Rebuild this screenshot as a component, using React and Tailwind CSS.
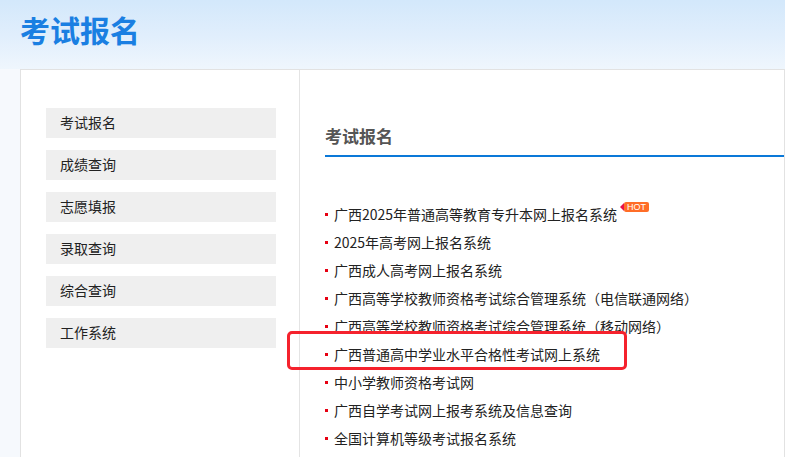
import React from 'react';

const menu = ['考试报名', '成绩查询', '志愿填报', '录取查询', '综合查询', '工作系统'];

const links = [
    { name: '广西2025年普通高等教育专升本网上报名系统', hot: true },
    { name: '2025年高考网上报名系统' },
    { name: '广西成人高考网上报名系统' },
    { name: '广西高等学校教师资格考试综合管理系统（电信联通网络）' },
    { name: '广西高等学校教师资格考试综合管理系统（移动网络）' },
    { name: '广西普通高中学业水平合格性考试网上系统' },
    { name: '中小学教师资格考试网' },
    { name: '广西自学考试网上报考系统及信息查询' },
    { name: '全国计算机等级考试报名系统' },
];

const HotBadge = () => (
    <span className="relative -top-[7px] ml-[3px] inline-flex items-center">
        <span className="w-0 h-0 border-y-[4px] border-y-transparent border-r-[4px] border-r-[#e8104a]" />
        <span className="bg-[#ff6d27] text-white text-[9px] leading-[10px] px-[3px] rounded-[2px] font-['Liberation_Sans',sans-serif]">HOT</span>
    </span>
);

const App = () => {
    return (
        <div className="relative w-[785px] h-[457px] overflow-hidden bg-[#f6f9fd] font-['Noto_Sans_CJK_SC','Noto_Sans',sans-serif]">
            <header className="h-[69px] pl-5 pt-[12px] bg-gradient-to-b from-[#d3e8fb] via-[#e0eefc] to-[#eff6fd]">
                <h1 className="text-[30px] leading-[34px] font-bold text-[#1a7fe2]">考试报名</h1>
            </header>

            <div className="ml-5 flex bg-white border border-[#e2e2e2] h-[420px]">
                <aside className="w-[279px] shrink-0 border-r border-[#e4e4e4] pt-[38px] pl-[25px] flex flex-col gap-3">
                    {menu.map(item => (
                        <div key={item} className="w-[230px] h-[30px] bg-[#efefef] pl-[14px] flex items-center text-[14px] leading-[20px] text-[#222] pb-[2px]">
                            {item}
                        </div>
                    ))}
                </aside>

                <main className="flex-1 pl-[25px] pt-[55px]">
                    <h2 className="text-[17px] leading-[22px] font-bold text-[#555]">考试报名</h2>
                    <div className="mt-[8px] h-[2px] bg-[#0a78d8]" />

                    <ul className="mt-[43px]">
                        {links.map(link => (
                            <li key={link.name} className="h-[28px] flex items-center text-[14px] text-[#222] whitespace-nowrap">
                                <span className="w-[3px] h-[3px] bg-[#e60012] mr-[6px]" />
                                <span>{link.name}</span>
                                {link.hot && <HotBadge />}
                            </li>
                        ))}
                    </ul>
                </main>
            </div>

            {/* annotation box */}
            <div className="absolute left-[287px] top-[331px] w-[340px] h-[39px] border-[3px] border-[#f5222d] rounded-[5px]" />
        </div>
    );
};

export default App;
